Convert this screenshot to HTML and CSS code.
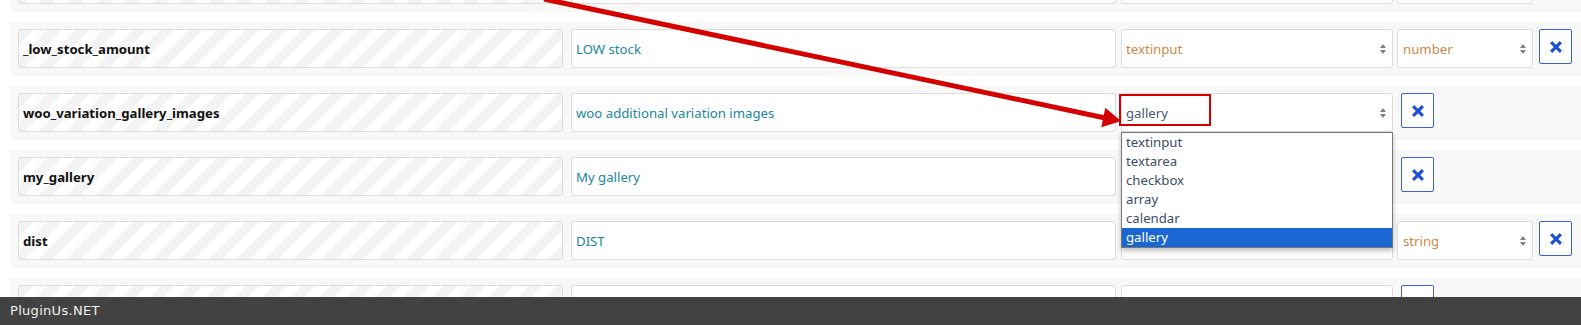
FILE: index.html
```html
<!DOCTYPE html>
<html>
<head>
<meta charset="utf-8">
<link rel="stylesheet" href="styles.css">
</head>
<body>
<div class="list">
  <div class="row">
    <div class="field name"></div>
    <div class="field label"></div>
    <div class="field type"><span class="arr"><svg width="6" height="12" viewBox="0 0 6 12"><path d="M0 5 L3 1 L6 5Z M0 7 L3 11 L6 7Z"/></svg></span></div>
    <div class="field data"><span class="arr"><svg width="6" height="12" viewBox="0 0 6 12"><path d="M0 5 L3 1 L6 5Z M0 7 L3 11 L6 7Z"/></svg></span></div>
    <div class="del"><svg width="12" height="12" viewBox="0 0 12 12"><path d="M2.3 2.3 L9.7 9.7 M9.7 2.3 L2.3 9.7"/></svg></div>
  </div>
  <div class="row">
    <div class="field name">_low_stock_amount</div>
    <div class="field label">LOW stock</div>
    <div class="field type">textinput<span class="arr"><svg width="6" height="12" viewBox="0 0 6 12"><path d="M0 5 L3 1 L6 5Z M0 7 L3 11 L6 7Z"/></svg></span></div>
    <div class="field data">number<span class="arr"><svg width="6" height="12" viewBox="0 0 6 12"><path d="M0 5 L3 1 L6 5Z M0 7 L3 11 L6 7Z"/></svg></span></div>
    <div class="del"><svg width="12" height="12" viewBox="0 0 12 12"><path d="M2.3 2.3 L9.7 9.7 M9.7 2.3 L2.3 9.7"/></svg></div>
  </div>
  <div class="row">
    <div class="field name">woo_variation_gallery_images</div>
    <div class="field label">woo additional variation images</div>
    <div class="field type focus">gallery<span class="arr"><svg width="6" height="12" viewBox="0 0 6 12"><path d="M0 5 L3 1 L6 5Z M0 7 L3 11 L6 7Z"/></svg></span>
      <span class="mark"></span>
      <ul class="menu">
        <li>textinput</li>
        <li>textarea</li>
        <li>checkbox</li>
        <li>array</li>
        <li>calendar</li>
        <li class="sel">gallery</li>
      </ul>
    </div>
    <div class="del"><svg width="12" height="12" viewBox="0 0 12 12"><path d="M2.3 2.3 L9.7 9.7 M9.7 2.3 L2.3 9.7"/></svg></div>
  </div>
  <div class="row">
    <div class="field name">my_gallery</div>
    <div class="field label">My gallery</div>
    <div class="field type"><span class="arr"><svg width="6" height="12" viewBox="0 0 6 12"><path d="M0 5 L3 1 L6 5Z M0 7 L3 11 L6 7Z"/></svg></span></div>
    <div class="del"><svg width="12" height="12" viewBox="0 0 12 12"><path d="M2.3 2.3 L9.7 9.7 M9.7 2.3 L2.3 9.7"/></svg></div>
  </div>
  <div class="row">
    <div class="field name">dist</div>
    <div class="field label">DIST</div>
    <div class="field type"><span class="arr"><svg width="6" height="12" viewBox="0 0 6 12"><path d="M0 5 L3 1 L6 5Z M0 7 L3 11 L6 7Z"/></svg></span></div>
    <div class="field data">string<span class="arr"><svg width="6" height="12" viewBox="0 0 6 12"><path d="M0 5 L3 1 L6 5Z M0 7 L3 11 L6 7Z"/></svg></span></div>
    <div class="del"><svg width="12" height="12" viewBox="0 0 12 12"><path d="M2.3 2.3 L9.7 9.7 M9.7 2.3 L2.3 9.7"/></svg></div>
  </div>
  <div class="row">
    <div class="field name"></div>
    <div class="field label"></div>
    <div class="field type"><span class="arr"><svg width="6" height="12" viewBox="0 0 6 12"><path d="M0 5 L3 1 L6 5Z M0 7 L3 11 L6 7Z"/></svg></span></div>
    <div class="del"><svg width="12" height="12" viewBox="0 0 12 12"><path d="M2.3 2.3 L9.7 9.7 M9.7 2.3 L2.3 9.7"/></svg></div>
  </div>
</div>
<svg class="arrow" width="1581" height="325" viewBox="0 0 1581 325">
  <line x1="544" y1="-1" x2="1104" y2="117.7"/>
  <polygon points="1121,121 1105.3,107.7 1101.3,127.3"/>
</svg>
<footer class="footer">PluginUs.NET</footer>
</body>
</html>
```

FILE: styles.css
```css
html, body {
  margin: 0;
  height: 325px;
  overflow: hidden;
  background: #fff;
  font-family: "Noto Sans", "Open Sans", sans-serif;
}

.list {
  margin-top: -42px;
  padding-left: 11px;
}

.row {
  display: flex;
  align-items: flex-start;
  background: #f8f8f8;
  padding: 7px 0 8px 7px;
  margin-bottom: 10px;
}

.field {
  box-sizing: border-box;
  height: 39px;
  border: 1px solid #dcdcdc;
  border-radius: 3px;
  background: #fff;
  display: flex;
  align-items: center;
  padding: 0 4px;
  font-size: 13.2px;
  white-space: nowrap;
}

.name {
  width: 545px;
  font-weight: 700;
  color: #111;
  background: repeating-linear-gradient(135deg, #f3f3f3 0 10px, #ffffff 10px 20px);
}

.label {
  width: 545px;
  margin-left: 8px;
  color: #22879a;
}

.type {
  width: 272px;
  margin-left: 5px;
  position: relative;
  color: #c88a46;
}

.type.focus {
  color: #4a5871;
}

.data {
  width: 136px;
  margin-left: 4px;
  padding-left: 5px;
  color: #c88a46;
}

.arr {
  margin-left: auto;
  margin-right: 2px;
  display: flex;
}

.arr svg path {
  fill: #808080;
}

.del {
  box-sizing: border-box;
  width: 33px;
  height: 35px;
  border: 1px solid #3c5fe0;
  border-radius: 2px;
  background: #fff;
  display: flex;
  align-items: center;
  justify-content: center;
}

.type + .del {
  margin-left: 8px;
}

.data + .del {
  margin-left: 6px;
}

.del svg path {
  stroke: #1f4fd6;
  stroke-width: 3.2;
  stroke-linecap: square;
  fill: none;
}

.mark {
  position: absolute;
  left: -3px;
  top: 0;
  width: 92px;
  height: 32px;
  box-sizing: border-box;
  border: 2px solid #d40000;
}

.menu {
  position: absolute;
  left: -1px;
  top: calc(100% + 1px);
  width: 272px;
  box-sizing: border-box;
  margin: 0;
  padding: 0;
  list-style: none;
  background: #fff;
  border: 1px solid #767676;
  box-shadow: 0 3px 5px rgba(0, 0, 0, 0.25);
  z-index: 5;
}

.menu li {
  height: 19px;
  line-height: 19px;
  padding-left: 4px;
  font-size: 13.2px;
  color: #3d4d63;
}

.menu li.sel {
  background: #1a67d3;
  color: #fff;
}

.arrow {
  position: absolute;
  left: 0;
  top: 0;
  pointer-events: none;
  z-index: 10;
}

.arrow line {
  stroke: #d40000;
  stroke-width: 5;
}

.arrow polygon {
  fill: #d40000;
}

.footer {
  position: fixed;
  left: 0;
  right: 0;
  bottom: 0;
  height: 28px;
  line-height: 28px;
  background: #424242;
  color: #f0f0f0;
  padding-left: 10px;
  font-family: "DejaVu Sans", sans-serif;
  font-size: 13px;
  letter-spacing: 0.3px;
  z-index: 20;
}
```
